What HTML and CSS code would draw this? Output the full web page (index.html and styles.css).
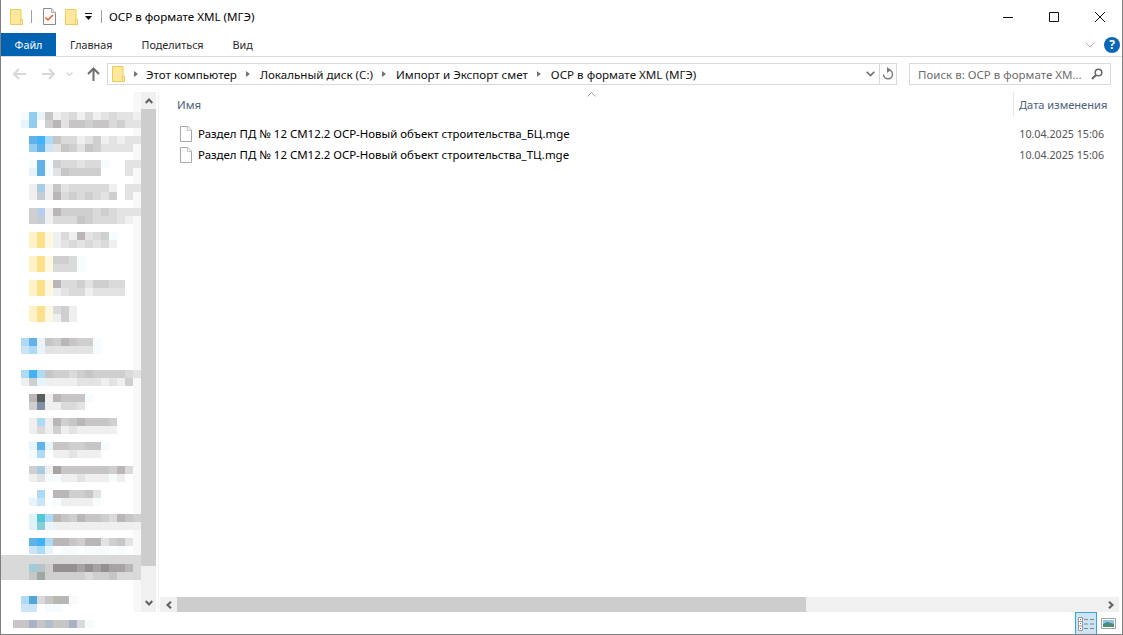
FILE: index.html
```html
<!DOCTYPE html>
<html lang="ru">
<head>
<meta charset="utf-8">
<title>ОСР в формате XML (МГЭ)</title>
<link rel="stylesheet" href="styles.css">
</head>
<body>
<svg class="defs" width="0" height="0" aria-hidden="true">
  <symbol id="folder" viewBox="0 0 13 16">
    <path d="M.5.5h10.5v10h1.5v5H.5z" fill="#ffe79c" stroke="#eccb5a"/>
    <path d="M10.5 15.5v-5h2v5z" fill="#fff3c4" stroke="#eccb5a"/>
  </symbol>
  <symbol id="file" viewBox="0 0 12 16">
    <path d="M.5.5h7.5l3.5 3.5v11.500H.5z" fill="#fff" stroke="#a8a8a8"/>
    <path d="M7.500.5v4h4" fill="#f4f4f4" stroke="#c4c4c4"/>
  </symbol>
</svg>
<div class="window">
  <header class="titlebar">
    <svg class="folder-ico qa-first"><use href="#folder"/></svg>
    <span class="qa-sep"></span>
    <svg class="check-ico" viewBox="0 0 13 17">
      <path d="M.5.5h8l4 4v12H.5z" fill="#fafafa" stroke="#8a8a8a"/>
      <path d="M8.500.5v4h4" fill="#e8e8e8" stroke="#b0b0b0"/>
      <path d="M2.500 9.500l2.500 2.500 5-5" fill="none" stroke="#e8622c" stroke-width="1.500"/>
    </svg>
    <svg class="folder-ico qa-second"><use href="#folder"/></svg>
    <svg class="qa-drop" viewBox="0 0 7 7">
      <path d="M0 .5h7" stroke="#111" fill="none"/>
      <path d="M0 3h7L3.500 7z" fill="#111"/>
    </svg>
    <span class="qa-sep qa-sep-last"></span>
    <span class="window-title">ОСР в формате XML (МГЭ)</span>
    <div class="win-controls">
      <button class="win-btn"><svg width="10" height="10" viewBox="0 0 10 10"><path d="M0 5.500h10" stroke="#111"/></svg></button>
      <button class="win-btn"><svg width="10" height="10" viewBox="0 0 10 10"><path d="M.5.5h9v9h-9z" fill="none" stroke="#111"/></svg></button>
      <button class="win-btn"><svg width="10" height="10" viewBox="0 0 10 10"><path d="M0 0l10 10M10 0L0 10" stroke="#111" fill="none"/></svg></button>
    </div>
  </header>

  <nav class="ribbon">
    <span class="tab tab-file">Файл</span>
    <span class="tab tab-home">Главная</span>
    <span class="tab tab-share">Поделиться</span>
    <span class="tab tab-view">Вид</span>
    <svg class="ribbon-chevron" viewBox="0 0 10 6"><path d="M.5.5L5 5 9.500.5" fill="none" stroke="#b4b4b4"/></svg>
    <span class="help">?</span>
  </nav>

  <div class="navbar">
    <svg class="nav-arrow nav-back" viewBox="0 0 13 12"><path d="M6 1L1 6l5 5M1 6h12" fill="none" stroke="#d8d8d8" stroke-width="2"/></svg>
    <svg class="nav-arrow nav-forward" viewBox="0 0 13 12"><path d="M7 1l5 5-5 5M12 6H0" fill="none" stroke="#d8d8d8" stroke-width="2"/></svg>
    <svg class="nav-recent" viewBox="0 0 7 5"><path d="M.5.5l3 3 3-3" fill="none" stroke="#d4d4d4" stroke-width="1.200"/></svg>
    <svg class="nav-arrow nav-up" viewBox="0 0 13 14"><path d="M1 7l5.500-5.500L12 7M6.500 2v12" fill="none" stroke="#6e6e6e" stroke-width="2"/></svg>
    <div class="address">
      <svg class="folder-ico addr-folder"><use href="#folder"/></svg>
      <span class="crumb-sep crumb-sep-first"></span><span class="crumb">Этот компьютер</span>
      <span class="crumb-sep"></span><span class="crumb">Локальный диск (C:)</span>
      <span class="crumb-sep"></span><span class="crumb">Импорт и Экспорт смет</span>
      <span class="crumb-sep"></span><span class="crumb">ОСР в формате XML (МГЭ)</span>
      <svg class="addr-drop" viewBox="0 0 9 6"><path d="M.7.7L4.500 4.500 8.300.7" fill="none" stroke="#6e6e6e" stroke-width="1.600"/></svg>
      <span class="refresh">
        <svg width="12" height="14" viewBox="0 0 12 14"><path d="M6 2.800a4.500 4.500 0 1 1-4.500 4.700" fill="none" stroke="#7a7a7a" stroke-width="1.500"/><path d="M5 0v6L9 3z" fill="#7a7a7a"/></svg>
      </span>
    </div>
    <div class="search">
      <span class="search-text">Поиск в: ОСР в формате XM...</span>
      <svg class="search-ico" width="12" height="12" viewBox="0 0 12 12"><circle cx="7.500" cy="4.500" r="3.300" fill="none" stroke="#666" stroke-width="1.500"/><path d="M5 7l-4 4" stroke="#666" stroke-width="2"/></svg>
    </div>
  </div>

  <main class="body">
    <aside class="sidebar">
      <div class="tree">
        <div class="it"><div class="mr"><i class="p"></i><i class="b4"></i><i class="b1"></i><i class="g5"></i><i class="g1"></i><i class="g2"></i><i class="g3"></i><i class="g1"></i><i class="g3"></i><i class="g1"></i><i class="g2"></i><i class="g3"></i><i class="g2"></i><i class="g2"></i><i class="g1"></i></div><div class="mr"><i class="b1"></i><i class="b4"></i><i></i><i class="g4"></i><i class="g6"></i><i class="g2"></i><i class="g5"></i><i class="g5"></i><i class="g4"></i><i class="g5"></i><i class="g5"></i><i class="g3"></i><i class="g4"></i><i class="g2"></i><i class="g2"></i></div></div>
        <div class="it"><div class="mr"><i></i><i class="b5"></i><i class="b6"></i><i class="b3"></i><i class="g5"></i><i class="g3"></i><i class="g3"></i><i class="g1"></i><i class="g2"></i><i class="g4"></i><i class="g1"></i><i class="g2"></i><i class="g1"></i><i class="g2"></i><i class="g2"></i></div><div class="mr"><i></i><i class="b4"></i><i class="b5"></i><i class="b2"></i><i class="g2"></i><i class="g5"></i><i class="g4"></i><i class="g2"></i><i class="g5"></i><i class="g4"></i><i class="g2"></i><i class="g2"></i><i class="g2"></i><i class="g2"></i></div></div>
        <div class="it"><div class="mr"><i></i><i class="p"></i><i class="b5"></i><i class="p"></i><i class="g4"></i><i class="g3"></i><i class="g3"></i><i class="g2"></i><i class="g3"></i><i class="g3"></i><i class="p"></i><i></i><i></i><i class="g2"></i><i class="g2"></i></div><div class="mr"><i></i><i class="b1"></i><i class="b5"></i><i class="p"></i><i class="g2"></i><i class="g5"></i><i class="g4"></i><i class="g4"></i><i class="g4"></i><i class="g4"></i><i></i><i></i><i></i><i class="g2"></i></div></div>
        <div class="it"><div class="mr"><i></i><i class="g1"></i><i class="b7"></i><i class="g1"></i><i class="g5"></i><i class="g2"></i><i class="g3"></i><i class="g3"></i><i class="g3"></i><i class="g3"></i><i class="g3"></i><i class="g1"></i><i></i><i class="g2"></i><i class="g2"></i></div><div class="mr"><i></i><i class="g1"></i><i class="b8"></i><i class="g1"></i><i class="g6"></i><i class="g3"></i><i class="g4"></i><i class="g3"></i><i class="g4"></i><i class="g3"></i><i class="g2"></i><i class="g4"></i><i></i><i class="g2"></i></div></div>
        <div class="it"><div class="mr"><i></i><i class="g4"></i><i class="b9"></i><i class="g1"></i><i class="g6"></i><i class="g4"></i><i class="g4"></i><i class="g4"></i><i class="g4"></i><i class="g3"></i><i class="g4"></i><i class="g3"></i><i class="g2"></i><i class="g2"></i><i class="g2"></i></div><div class="mr"><i></i><i class="g4"></i><i class="b8"></i><i class="g1"></i><i class="g3"></i><i class="g3"></i><i class="g3"></i><i class="g5"></i><i class="g4"></i><i class="g3"></i><i class="g3"></i><i class="g3"></i><i class="g2"></i><i class="g1"></i></div></div>
        <div class="it"><div class="mr"><i></i><i class="y2"></i><i class="y3"></i><i class="y1"></i><i class="g1"></i><i class="g3"></i><i class="g1"></i><i class="g6"></i><i class="g2"></i><i class="g3"></i><i class="g4"></i><i class="p"></i></div><div class="mr"><i></i><i class="y2"></i><i class="y3"></i><i class="y1"></i><i class="g1"></i><i class="g2"></i><i class="g3"></i><i class="g2"></i><i class="g3"></i><i class="g2"></i><i class="g3"></i><i class="g1"></i></div></div>
        <div class="it"><div class="mr"><i></i><i class="y2"></i><i class="y3"></i><i class="y1"></i><i class="g4"></i><i class="g4"></i><i class="g3"></i><i class="p"></i></div><div class="mr"><i></i><i class="y2"></i><i class="y3"></i><i class="y1"></i><i class="g3"></i><i class="g3"></i><i class="g3"></i><i class="p"></i></div></div>
        <div class="it"><div class="mr"><i></i><i class="y2"></i><i class="y3"></i><i class="y1"></i><i class="g6"></i><i class="g3"></i><i class="g3"></i><i class="g4"></i><i class="g2"></i><i class="g4"></i><i class="g4"></i><i class="g3"></i><i class="g3"></i></div><div class="mr"><i></i><i class="y2"></i><i class="y3"></i><i class="y1"></i><i class="g1"></i><i class="g2"></i><i class="g3"></i><i class="g3"></i><i class="g1"></i><i class="g2"></i><i class="g2"></i><i class="g2"></i><i class="g2"></i></div></div>
        <div class="it it-nudge"><div class="mr"><i></i><i class="y2"></i><i class="y3"></i><i class="y1"></i><i class="g3"></i><i class="g4"></i><i class="g1"></i></div><div class="mr"><i></i><i class="y2"></i><i class="y3"></i><i class="y1"></i><i class="g1"></i><i class="g4"></i><i class="g1"></i></div></div>
        <div class="it it-section"><div class="mr"><i class="b3"></i><i class="b5"></i><i class="b1"></i><i class="g5"></i><i class="g4"></i><i class="g6"></i><i class="g5"></i><i class="g4"></i><i class="g4"></i><i class="p"></i></div><div class="mr"><i class="b2"></i><i class="b3"></i><i class="b1"></i><i class="g2"></i><i class="g2"></i><i class="g2"></i><i class="g2"></i><i class="g2"></i><i class="g2"></i><i class="p"></i></div></div>
        <div class="it"><div class="mr"><i class="b3"></i><i class="b6"></i><i class="b3"></i><i class="g5"></i><i class="g4"></i><i class="g4"></i><i class="g3"></i><i class="g4"></i><i class="g5"></i><i class="g4"></i><i class="g4"></i><i class="g4"></i><i class="g4"></i><i class="g3"></i><i class="g2"></i></div><div class="mr"><i class="g1"></i><i class="g4"></i><i class="b1"></i><i class="g1"></i><i class="g1"></i><i class="g1"></i><i class="g1"></i><i class="g2"></i><i class="g2"></i><i class="g2"></i><i class="g1"></i><i class="g2"></i><i class="g1"></i><i class="g4"></i></div></div>
        <div class="it"><div class="mr"><i></i><i class="g6"></i><i class="d1"></i><i class="g1"></i><i class="g6"></i><i class="g5"></i><i class="g5"></i><i class="g5"></i><i class="p"></i></div><div class="mr"><i></i><i class="g4"></i><i class="d2"></i><i class="g1"></i><i class="g1"></i><i class="g3"></i><i class="g3"></i><i class="g2"></i></div></div>
        <div class="it"><div class="mr"><i></i><i class="g1"></i><i class="b3"></i><i class="g1"></i><i class="g6"></i><i class="g4"></i><i class="g5"></i><i class="g6"></i><i class="g5"></i><i class="g5"></i><i class="g5"></i><i class="g4"></i></div><div class="mr"><i></i><i class="g1"></i><i class="g3"></i><i class="g1"></i><i class="g4"></i><i class="g1"></i><i class="g2"></i><i class="g1"></i><i class="g1"></i><i class="g1"></i><i class="g1"></i><i class="g1"></i></div></div>
        <div class="it"><div class="mr"><i></i><i class="b1"></i><i class="b5"></i><i class="b1"></i><i class="g5"></i><i class="g5"></i><i class="g4"></i><i class="g4"></i><i class="g5"></i><i class="g5"></i><i class="p"></i></div><div class="mr"><i></i><i class="p"></i><i class="b3"></i><i></i><i class="g1"></i><i class="g1"></i><i class="g2"></i><i class="g1"></i><i class="g1"></i><i class="g1"></i></div></div>
        <div class="it"><div class="mr"><i></i><i class="g4"></i><i class="b7"></i><i class="g1"></i><i class="g7"></i><i class="g5"></i><i class="g5"></i><i class="g5"></i><i class="g5"></i><i class="g5"></i><i class="g5"></i><i class="g4"></i><i class="g6"></i><i class="g3"></i></div><div class="mr"><i></i><i class="g1"></i><i class="g2"></i><i class="p"></i><i class="p"></i><i class="g1"></i><i class="g1"></i><i class="g2"></i><i class="g1"></i><i class="g1"></i><i class="g1"></i><i class="p"></i><i class="g1"></i></div></div>
        <div class="it"><div class="mr"><i></i><i></i><i class="b3"></i><i></i><i class="g6"></i><i class="g6"></i><i class="g4"></i><i class="g4"></i><i class="g5"></i><i class="g2"></i></div><div class="mr"><i></i><i class="b1"></i><i class="b2"></i><i></i><i class="p"></i><i class="g1"></i><i class="g1"></i><i class="g1"></i><i class="g1"></i><i class="p"></i></div></div>
        <div class="it"><div class="mr"><i></i><i class="t0"></i><i class="t1"></i><i class="b3"></i><i class="g6"></i><i class="g5"></i><i class="g4"></i><i class="g6"></i><i class="g5"></i><i class="g5"></i><i class="g4"></i><i class="g3"></i><i class="g6"></i><i class="g5"></i><i class="g4"></i></div><div class="mr"><i></i><i class="t0"></i><i class="t2"></i><i class="b1"></i><i class="g1"></i><i class="g1"></i><i class="g1"></i><i class="g1"></i><i class="g1"></i><i class="g1"></i><i class="g1"></i><i class="g1"></i><i class="g1"></i><i class="g1"></i><i class="g1"></i></div></div>
        <div class="it"><div class="mr"><i></i><i class="b5"></i><i class="b6"></i><i class="b3"></i><i class="g6"></i><i class="g6"></i><i class="g5"></i><i class="g4"></i><i class="g6"></i><i class="g6"></i><i class="g2"></i><i class="g4"></i><i class="g5"></i><i class="g2"></i></div><div class="mr"><i></i><i class="b2"></i><i class="b3"></i><i class="b1"></i><i></i><i class="p"></i><i class="p"></i><i></i><i class="p"></i><i class="p"></i><i class="p"></i><i></i><i class="p"></i></div></div>
        <div class="it-selected"><div class="mr"><i></i><i class="s1"></i><i class="s2"></i><i class="g4"></i><i class="g8"></i><i class="g8"></i><i class="g8"></i><i class="g7"></i><i class="g8"></i><i class="g7"></i><i class="g8"></i><i class="g7"></i><i class="g7"></i><i class="g6"></i></div><div class="mr"><i></i><i class="g5"></i><i class="s3"></i><i class="g4"></i><i class="g4"></i><i class="g4"></i><i class="g4"></i><i class="g4"></i><i class="g3"></i><i class="g4"></i><i class="g4"></i><i class="g5"></i><i class="g3"></i><i class="g3"></i></div></div>
        <div class="it it-end"><div class="mr"><i class="b3"></i><i class="s4"></i><i class="g3"></i><i class="g5"></i><i class="s5"></i><i class="g6"></i><i class="p"></i></div><div class="mr"><i class="b2"></i><i class="b2"></i><i></i><i class="p"></i><i class="p"></i></div></div>
        <div class="mr mr-wide"><i class="g5"></i><i class="g5"></i><i class="s6"></i><i class="g5"></i><i class="s7"></i><i class="g5"></i><i class="g5"></i><i class="s6"></i><i class="g3"></i><i class="p"></i></div>
      </div>
      <div class="vscroll">
        <span class="sb-btn"><svg width="8" height="6" viewBox="0 0 8 6"><path d="M.7 5L4 1.500 7.300 5" fill="none" stroke="#606060" stroke-width="2"/></svg></span>
        <span class="v-thumb"></span>
        <span class="v-rest"><svg width="8" height="6" viewBox="0 0 8 6"><path d="M.7 1L4 4.500 7.300 1" fill="none" stroke="#606060" stroke-width="2"/></svg></span>
      </div>
    </aside>

    <section class="content">
      <svg class="sort-caret" width="9" height="5" viewBox="0 0 9 5"><path d="M.5 4.500l4-4 4 4" fill="none" stroke="#9a9a9a"/></svg>
      <div class="col-head">
        <span class="col-name">Имя</span>
        <span class="col-date">Дата изменения</span>
      </div>
      <div class="files">
        <div class="file">
          <svg class="file-ico"><use href="#file"/></svg>
          <span class="file-name">Раздел ПД № 12 СМ12.2 ОСР-Новый объект строительства_БЦ.mge</span>
          <span class="file-date">10.04.2025 15:06</span>
        </div>
        <div class="file">
          <svg class="file-ico"><use href="#file"/></svg>
          <span class="file-name">Раздел ПД № 12 СМ12.2 ОСР-Новый объект строительства_ТЦ.mge</span>
          <span class="file-date">10.04.2025 15:06</span>
        </div>
      </div>
      <div class="hscroll">
        <span class="h-btn"><svg width="6" height="8" viewBox="0 0 6 8"><path d="M5 .7L1.500 4 5 7.300" fill="none" stroke="#606060" stroke-width="2"/></svg></span>
        <span class="h-thumb"></span>
        <span class="h-btn h-btn-end"><svg width="6" height="8" viewBox="0 0 6 8"><path d="M1 .7L4.500 4 1 7.300" fill="none" stroke="#606060" stroke-width="2"/></svg></span>
      </div>
    </section>
  </main>

  <footer class="statusbar">
    <span class="view-btn view-on">
      <svg width="17" height="14" viewBox="0 0 17 14">
        <path d="M.5.5h4v13h-4zM.5 4.500h4M.5 9h4" fill="#fff" stroke="#9a9a9a"/>
        <path d="M2 2h1v1H2z" fill="#666"/><path d="M2 6h1v1H2z" fill="#2a8ad4"/><path d="M2 11h1v1H2z" fill="#d8362a"/>
        <path d="M6 2.500h4M12 2.500h4M6 7h4M12 7h4M6 11.500h4M12 11.500h4" stroke="#808890"/>
      </svg>
    </span>
    <span class="view-btn">
      <svg width="15" height="11" viewBox="0 0 15 11">
        <path d="M.5.500h14v10H.5z" fill="#fff" stroke="#a0a0a0"/>
        <path d="M2 2h11v4H2z" fill="#8cc4e8"/>
        <path d="M2 6l4-2 4 1 3 1v3H2z" fill="#4e8a78"/>
      </svg>
    </span>
  </footer>
</div>
</body>
</html>
```

FILE: styles.css
```css
* { box-sizing: border-box; }

html, body {
  margin: 0;
  height: 100%;
  background: #fff;
  overflow: hidden;
}

.defs { position: absolute; }

.window {
  width: 1123px;
  height: 635px;
  display: flex;
  flex-direction: column;
  border: 1px solid #7f7f7f;
  border-top: 0;
  font-family: "Noto Sans", "Open Sans", sans-serif;
  font-size: 11.5px;
  color: #000;
}

/* title bar */
.titlebar {
  height: 33px;
  display: flex;
  align-items: center;
  flex: none;
}
.folder-ico { width: 13px; height: 16px; flex: none; }
.qa-first { margin-left: 9px; }
.qa-sep { width: 1px; height: 13px; background: #a0a0a0; margin-left: 8px; flex: none; }
.check-ico { width: 13px; height: 17px; margin-left: 11px; flex: none; }
.qa-second { margin-left: 9px; }
.qa-drop { width: 7px; height: 7px; margin-left: 7px; flex: none; }
.qa-sep-last { margin-left: 9px; }
.window-title { margin-left: 7px; font-size: 11.6px; }
.win-controls { margin-left: auto; display: flex; align-self: flex-start; margin-right: -1px; }
.win-btn {
  width: 46px;
  height: 33px;
  padding: 0;
  border: 0;
  background: none;
  display: flex;
  align-items: center;
  justify-content: center;
}

/* ribbon tabs */
.ribbon {
  height: 24px;
  flex: none;
  display: flex;
  align-items: center;
  border-bottom: 1px solid #dadada;
  color: #2a2a2a;
}
.tab { font-size: 10.8px; }
.tab-file {
  width: 55px;
  height: 23px;
  background: #0063b1;
  color: #fff;
  display: flex;
  align-items: center;
  justify-content: center;
}
.tab-home { margin-left: 14px; }
.tab-share { margin-left: 29px; }
.tab-view { margin-left: 29px; }
.ribbon-chevron { width: 10px; height: 6px; margin-left: auto; flex: none; }
.help {
  width: 16px;
  height: 16px;
  margin: 0 2px 0 9px;
  border-radius: 50%;
  background: #0b66b8;
  color: #fff;
  font-weight: 700;
  font-size: 12px;
  line-height: 16px;
  text-align: center;
  flex: none;
}

/* navigation row */
.navbar {
  height: 35px;
  flex: none;
  display: flex;
  align-items: center;
  padding: 0 0 1px 12px;
}
.nav-arrow { width: 13px; height: 12px; flex: none; }
.nav-forward { margin-left: 16px; }
.nav-recent { width: 7px; height: 5px; margin-left: 11px; flex: none; }
.nav-up { height: 14px; margin-left: 14px; }
.address {
  width: 790px;
  height: 22px;
  margin-left: 7px;
  border: 1px solid #d9d9d9;
  display: flex;
  align-items: center;
  flex: none;
  padding-left: 4px;
}
.addr-folder { width: 13px; height: 16px; }
.crumb-sep {
  width: 4px;
  height: 6px;
  margin: 0 10px 0 9px;
  flex: none;
  background: #707070;
  clip-path: polygon(0 0, 100% 50%, 0 100%);
}
.crumb-sep-first { margin-right: 8px; }
.crumb { font-size: 11.6px; white-space: nowrap; color: #111; }
.addr-drop { width: 9px; height: 6px; margin-left: auto; flex: none; }
.refresh {
  width: 17px;
  height: 20px;
  margin-left: 4px;
  border-left: 1px solid #d9d9d9;
  display: flex;
  align-items: center;
  justify-content: center;
  flex: none;
}
.search {
  width: 202px;
  height: 22px;
  margin-left: 12px;
  border: 1px solid #d9d9d9;
  display: flex;
  align-items: center;
  flex: none;
  padding: 0 7px 0 8px;
  color: #6d6d6d;
}
.search-text { font-size: 11.5px; white-space: nowrap; }
.search-ico { margin-left: auto; flex: none; }

/* main area */
.body {
  flex: 1;
  min-height: 0;
  display: flex;
}
.sidebar {
  width: 155px;
  flex: none;
  display: flex;
  margin-right: 2px;
}
.tree {
  width: 140px;
  flex: none;
  padding: 20px 0 0 20px;
  background: linear-gradient(to left, #f8f8f8 8px, transparent 8px);
}
.mr { display: flex; height: 8px; }
.mr i { width: 8px; height: 8px; flex: none; display: block; }
.mr-wide { margin-left: -8px; }
.it { height: 24px; }
.it-nudge { margin-top: 2px; height: 32px; }
.it-section { height: 32px; }
.it-end { margin-top: 16px; }
.it-selected {
  height: 25px;
  margin: -7px 0 0 -20px;
  padding: 9px 0 0 20px;
  background: #d9d9d9;
}

.p  { background: #f6fbfe; }
.g1 { background: #efeff0; }
.g2 { background: #e4e3e4; }
.g3 { background: #dadadb; }
.g4 { background: #d0cfd0; }
.g5 { background: #c8c5c7; }
.g6 { background: #bab5b6; }
.g7 { background: #a8a2a2; }
.g8 { background: #938f93; }
.b1 { background: #e8f4fb; }
.b2 { background: #cbe5f7; }
.b3 { background: #aedaf5; }
.b4 { background: #92ccf0; }
.b5 { background: #62b2ea; }
.b6 { background: #3fb2fa; }
.b7 { background: #a8cce2; }
.b8 { background: #c4ced6; }
.b9 { background: #b8cdec; }
.y1 { background: #fdf6e0; }
.y2 { background: #fdf1c8; }
.y3 { background: #fde08c; }
.d1 { background: #5a5f5e; }
.d2 { background: #8090a8; }
.t0 { background: #def3f5; }
.t1 { background: #54c6dc; }
.t2 { background: #88ccd8; }
.s1 { background: #9fccd8; }
.s2 { background: #b6c4ca; }
.s3 { background: #a0a8a4; }
.s4 { background: #4fa6d8; }
.s5 { background: #b8b8ae; }
.s6 { background: #aab1c9; }
.s7 { background: #b0bfd0; }

.vscroll {
  width: 15px;
  flex: none;
  display: flex;
  flex-direction: column;
  background: #f0f0f0;
}
.sb-btn {
  height: 17px;
  flex: none;
  display: flex;
  align-items: center;
  justify-content: center;
}
.v-thumb { height: 457px; flex: none; background: #cdcdcd; }
.v-rest {
  flex: 1;
  display: flex;
  align-items: flex-end;
  justify-content: center;
  padding-bottom: 6px;
}

/* file list */
.content {
  flex: 1;
  min-width: 0;
  position: relative;
  display: flex;
  flex-direction: column;
  border-left: 1px solid #f0f0f0;
}
.sort-caret { position: absolute; left: 428px; top: 0; }
.col-head {
  height: 25px;
  flex: none;
  display: flex;
  align-items: center;
  justify-content: space-between;
  padding: 0 14px 1px 18px;
  color: #4c607a;
}
.col-name { font-size: 11.5px; }
.col-date {
  width: 95px;
  align-self: stretch;
  display: flex;
  align-items: center;
  padding-left: 5px;
  border-left: 1px solid #e5e5e5;
  white-space: nowrap;
  font-size: 11.1px;
}
.files { flex: 1; padding-top: 6px; }
.file {
  height: 21px;
  display: flex;
  align-items: center;
  padding-left: 21px;
}
.file-ico { width: 12px; height: 16px; flex: none; }
.file-name { margin-left: 6px; font-size: 11.45px; white-space: nowrap; }
.file-date { margin-left: auto; margin-right: 18px; color: #555; font-size: 10.7px; white-space: nowrap; }

.hscroll {
  height: 15px;
  flex: none;
  margin: 0 3px 0 1px;
  display: flex;
  background: #f0f0f0;
}
.h-btn {
  width: 17px;
  flex: none;
  display: flex;
  align-items: center;
  justify-content: center;
}
.h-btn-end { margin-left: auto; }
.h-thumb { width: 629px; flex: none; background: #cdcdcd; }

/* status bar */
.statusbar {
  height: 22px;
  flex: none;
  display: flex;
  justify-content: flex-end;
  padding-right: 3px;
}
.view-btn {
  width: 21px;
  height: 22px;
  display: flex;
  align-items: center;
  justify-content: center;
  border: 1px solid transparent;
  border-bottom: 0;
}
.view-on { width: 22px; background: #cce4f4; border-color: #3aa4dc; margin-right: 1px; }
```
